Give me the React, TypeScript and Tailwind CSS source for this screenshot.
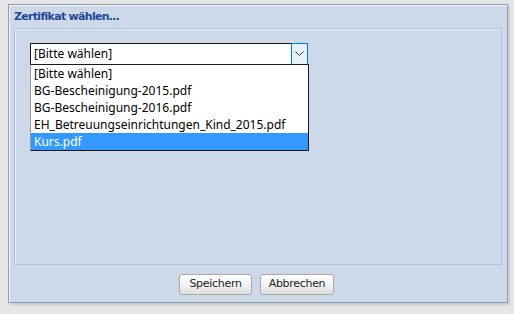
import React from 'react';

const options = [
  '[Bitte wählen]',
  'BG-Bescheinigung-2015.pdf',
  'BG-Bescheinigung-2016.pdf',
  'EH_Betreuungseinrichtungen_Kind_2015.pdf',
  'Kurs.pdf',
];

export default function App() {
  const selected = 4;
  return (
    <div className="w-[514px] h-[314px] bg-[#e6e6e6] pt-[4px] pl-[8px] font-['Liberation_Sans',sans-serif]">
      {/* Dialog */}
      <div className="w-[500px] h-[299px] border border-[#8a9cb8] bg-[#cdd9e8] shadow-[inset_1px_1px_0_#f4f7fb,2px_2px_2px_rgba(0,0,0,0.12)] flex flex-col">
        <div className="h-[23px] pl-[5px] pt-[5px] text-[11px] font-bold leading-[13px] text-[#1f4595] font-['DejaVu_Sans',sans-serif] tracking-[-0.7px]">
          Zertifikat wählen...
        </div>

        <div className="mx-[5px] h-[237px] border border-[#a8bfe9] shadow-[inset_1px_1px_0_#e4ecf8] pl-[15px] pt-[14px]">
          {/* Select with open list */}
          <div className="relative w-[278px] font-['Noto_Sans',sans-serif] text-[12px] text-black">
            <div className="h-[22px] border border-[#1a1a1a] bg-white flex items-center">
              <span className="flex-1 pl-[3px] leading-none">[Bitte wählen]</span>
              <div className="w-[17px] h-[22px] -mr-px -my-px border border-[#0078d7] bg-[#e5f1fb] flex items-center justify-center">
                <svg width="9" height="6" viewBox="0 0 9 6">
                  <path d="M0.5 0.5 L4.5 4.5 L8.5 0.5" fill="none" stroke="#333" strokeWidth="1" />
                </svg>
              </div>
            </div>
            <div className="absolute left-0 top-[21px] w-[279px] border border-[#1a1a1a] border-l-[#9a9a9a] bg-white">
              {options.map((o, i) => (
                <div
                  key={o}
                  className={`h-[17px] pl-[3px] flex items-center leading-none ${
                    i === selected ? 'bg-[#3399ff] text-white' : 'text-black'
                  }`}
                >
                  {o}
                </div>
              ))}
            </div>
          </div>
        </div>

        <div className="flex justify-center gap-[8px] mt-[9px] mr-[3px]">
          <button className="w-[73px] h-[21px] rounded-[3px] border border-[#a9a9a9] bg-gradient-to-b from-white via-[#f3f3f3] to-[#dedede] text-[11px] text-[#222] font-['DejaVu_Sans',sans-serif] tracking-[-0.3px]">
            Speichern
          </button>
          <button className="w-[74px] h-[21px] rounded-[3px] border border-[#a9a9a9] bg-gradient-to-b from-white via-[#f3f3f3] to-[#dedede] text-[11px] text-[#222] font-['DejaVu_Sans',sans-serif] tracking-[-0.3px]">
            Abbrechen
          </button>
        </div>
      </div>
    </div>
  );
}
